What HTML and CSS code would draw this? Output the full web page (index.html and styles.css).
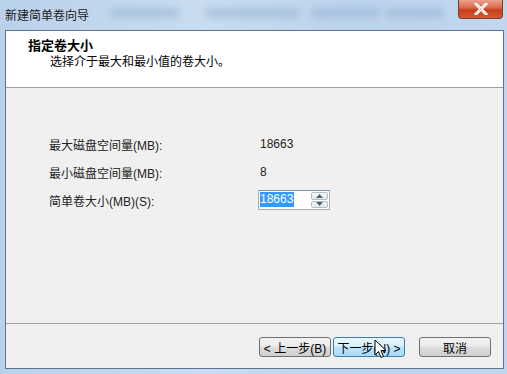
FILE: index.html
```html
<!DOCTYPE html>
<html lang="zh-CN">
<head>
    <meta charset="utf-8" />
    <title>新建简单卷向导</title>
    <link rel="stylesheet" href="styles.css">
</head>
<body>
    <div class="window">
        <!-- 標題列 -->
        <div class="titlebar">
            <span class="caption">新建简单卷向导</span>
            <span class="blur b1"></span>
            <span class="blur b2"></span>
            <span class="blur b3"></span>
            <span class="blur b4"></span>
            <div class="close-btn">
                <svg width="14" height="12" viewBox="0 0 14 12">
                    <path d="M2 1 L12 11 M12 1 L2 11" stroke="#ffffff" stroke-width="3" stroke-linecap="square" />
                    <path d="M2 1 L12 11 M12 1 L2 11" stroke="#8a3a26" stroke-width="0.6" fill="none" opacity="0.4" />
                </svg>
            </div>
        </div>
        <div class="client">
            <!-- 上方說明 -->
            <div class="header">
                <div class="head-title">指定卷大小</div>
                <div class="head-sub">选择介于最大和最小值的卷大小。</div>
            </div>
            <!-- 內容 -->
            <div class="content">
                <div class="row">
                    <span class="label">最大磁盘空间量(MB):</span>
                    <span class="value">18663</span>
                </div>
                <div class="row">
                    <span class="label">最小磁盘空间量(MB):</span>
                    <span class="value">8</span>
                </div>
                <div class="row">
                    <span class="label">简单卷大小(MB)(S):</span>
                    <div class="spin">
                        <div class="spin-edit"><span class="sel">18663</span></div>
                        <div class="spin-btns">
                            <div class="arrow up">
                                <svg width="7" height="4" viewBox="0 0 7 4"><path d="M0 4 L3.5 0 L7 4 Z" fill="#4d6185" /></svg>
                            </div>
                            <div class="arrow down">
                                <svg width="7" height="4" viewBox="0 0 7 4"><path d="M0 0 L3.5 4 L7 0 Z" fill="#4d6185" /></svg>
                            </div>
                        </div>
                    </div>
                </div>
            </div>
            <!-- 按鈕 -->
            <div class="footer">
                <button class="btn">&lt; 上一步(B)</button>
                <button class="btn hot">下一步(N) &gt;
                    <svg class="cursor" width="14" height="20" viewBox="0 0 14 20">
                        <path d="M1 1 L1 16 L4.5 12.5 L7 18.5 L9.5 17.5 L7 11.5 L12 11.5 Z" fill="#ffffff" stroke="#000000" stroke-width="1" stroke-linejoin="round" />
                    </svg>
                </button>
                <button class="btn cancel">取消</button>
            </div>
        </div>
    </div>
</body>
</html>
```
FILE: styles.css
```css
body {
    margin: 0;
    font-family: "Liberation Sans", "Noto Sans CJK SC", sans-serif;
    font-size: 12px;
}

.window {
    width: 507px;
    height: 374px;
    display: flex;
    flex-direction: column;
    background: linear-gradient(90deg, #b9d1ea 0%, #c9dcf0 40%, #bcd3ec 70%, #c2d7ee 100%);
    overflow: hidden;
}

.titlebar {
    position: relative;
    height: 30px;
    flex: none;
    display: flex;
    align-items: center;
    padding-left: 5px;
}

.caption {
    color: #1a1a1a;
    position: relative;
    z-index: 1;
    margin-top: -2px;
}

.blur {
    position: absolute;
    height: 10px;
    border-radius: 5px;
    background: #9cb6d6;
    filter: blur(3px);
    opacity: 0.6;
    top: 8px;
}

.b1 { left: 110px; width: 70px; }
.b2 { left: 205px; width: 95px; }
.b3 { left: 310px; width: 70px; }
.b4 { left: 385px; width: 60px; }

.close-btn {
    position: absolute;
    right: 4px;
    top: 0;
    width: 45px;
    height: 19px;
    border: 1px solid #7a3d2e;
    border-top: none;
    border-radius: 0 0 4px 4px;
    background: linear-gradient(#eba38c 0%, #d8654a 45%, #c43e1a 55%, #d55a32 100%);
    display: flex;
    align-items: center;
    justify-content: center;
    box-sizing: border-box;
}

.client {
    flex: 1;
    margin: 0 3px 5px 5px;
    border: 1px solid #5d7393;
    background: #f0f0f0;
    display: flex;
    flex-direction: column;
}

.header {
    height: 57px;
    flex: none;
    background: #ffffff;
    border-bottom: 1px solid #a0a0a0;
    padding: 7px 0 0 22px;
    box-sizing: border-box;
}

.head-title {
    font-weight: bold;
    font-size: 13px;
    line-height: 16px;
    color: #000;
}

.head-sub {
    padding-left: 22px;
    line-height: 16px;
    color: #000;
}

.content {
    flex: 1;
    padding: 46px 0 0 43px;
    display: flex;
    flex-direction: column;
    gap: 8px;
    border-bottom: 1px solid #a0a0a0;
}

.row {
    display: flex;
    align-items: center;
    height: 20px;
    color: #222;
}

.label {
    width: 211px;
}

.spin {
    display: flex;
    align-items: stretch;
    height: 20px;
    border: 1px solid #abadb3;
    border-top-color: #7a8eae;
    background: #fff;
    box-sizing: border-box;
    margin-left: -2px;
}

.spin-edit {
    width: 51px;
    padding: 1px 0 0 1px;
}

.sel {
    background: #3399ff;
    color: #fff;
    display: inline-block;
    line-height: 15px;
    padding-right: 1px;
}

.spin-btns {
    width: 17px;
    display: flex;
    flex-direction: column;
    gap: 1px;
    padding: 1px 1px 1px 0;
}

.arrow {
    flex: 1;
    border: 1px solid #b6bcc6;
    border-radius: 2px;
    background: linear-gradient(#fafafa, #e3e6ea);
    display: flex;
    align-items: center;
    justify-content: center;
}

.footer {
    height: 44px;
    flex: none;
    display: flex;
    align-items: flex-start;
    justify-content: flex-end;
    padding: 13px 12px 0 0;
    box-sizing: border-box;
}

.btn {
    position: relative;
    width: 72px;
    height: 20px;
    margin-left: 2px;
    border: 1px solid #707070;
    border-radius: 3px;
    background: linear-gradient(#f2f2f2 0%, #ebebeb 45%, #dddddd 50%, #cfcfcf 100%);
    font-family: "Liberation Sans", "Noto Sans CJK SC", sans-serif;
    font-size: 12px;
    color: #000;
    padding: 0;
}

.btn.hot {
    border-color: #3c7fb1;
    background: linear-gradient(#eaf6fd 0%, #d9f0fc 45%, #bee6fd 50%, #a7d9f5 100%);
}

.btn.cancel {
    margin-left: 14px;
}

.cursor {
    position: absolute;
    left: 40px;
    top: 1px;
}
```
